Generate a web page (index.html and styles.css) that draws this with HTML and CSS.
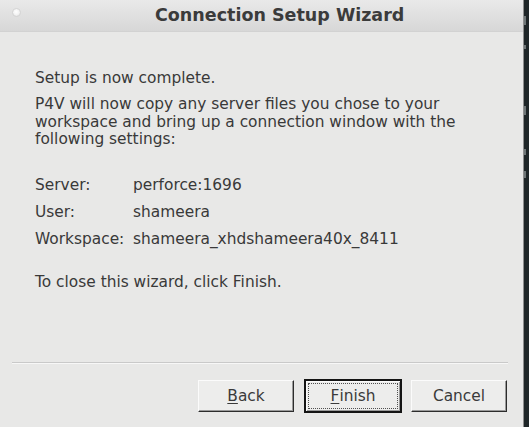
FILE: index.html
```html
<!DOCTYPE html>
<html>
<head>
<meta charset="utf-8">
<link rel="stylesheet" href="styles.css">
</head>
<body>
<div class="screen">
  <div class="window">
    <div class="titlebar">
      <span class="close-dot"></span>
      <span class="title">Connection Setup Wizard</span>
    </div>
    <div class="content">
      <p class="p1">Setup is now complete.</p>
      <p class="p2">P4V will now copy any server files you chose to your<br>workspace and bring up a connection window with the<br>following settings:</p>
      <div class="settings">
        <div class="row"><span class="key">Server:</span><span class="val">perforce:1696</span></div>
        <div class="row"><span class="key">User:</span><span class="val">shameera</span></div>
        <div class="row"><span class="key">Workspace:</span><span class="val">shameera_xhdshameera40x_8411</span></div>
      </div>
      <p class="p3">To close this wizard, click Finish.</p>
    </div>
    <div class="sep"></div>
    <div class="buttons">
      <button class="btn btn-back"><u>B</u>ack</button>
      <button class="btn btn-finish"><span class="focus"><u>F</u>inish</span></button>
      <button class="btn btn-cancel">Cancel</button>
    </div>
  </div>
  <div class="strip">
    <span class="mark m1"></span>
    <span class="mark m2"></span>
    <span class="mark m3"></span>
    <span class="mark m4"></span>
    <span class="mark m5"></span>
  </div>
</div>
</body>
</html>
```
FILE: styles.css
```css
html, body {
  margin: 0;
  padding: 0;
}
body {
  width: 529px;
  height: 427px;
  overflow: hidden;
  background: #1f2628;
  font-family: "DejaVu Sans", sans-serif;
}
.screen {
  display: flex;
  width: 529px;
  height: 427px;
}
.window {
  width: 523px;
  height: 427px;
  background: #e8e8e7;
  display: flex;
  flex-direction: column;
  flex: none;
}
.titlebar {
  height: 32px;
  box-sizing: border-box;
  padding-top: 5px;
  display: flex;
  align-items: flex-start;
  background: linear-gradient(#e9e9e9, #d7d7d7);
  border-bottom: 1px solid #d2d2d2;
}
.close-dot {
  width: 9px;
  height: 9px;
  box-sizing: border-box;
  margin-left: 12px;
  margin-top: 3px;
  border-radius: 50%;
  background: radial-gradient(circle at 45% 40%, #ffffff 0%, #f3f3f3 50%, #dcdcdc 100%);
  border: 1px solid #d4d4d4;
  flex: none;
}
.title {
  margin-left: 134px;
  font-weight: bold;
  font-size: 17.5px;
  line-height: 20px;
  color: #3b3b3b;
  white-space: nowrap;
}
.content {
  padding: 38px 0 0 35px;
  color: #393939;
  font-size: 15.4px;
  flex: 1;
}
.content p {
  margin: 0;
  white-space: nowrap;
}
.p1 {
  line-height: 17px;
}
.p2 {
  margin-top: 9px !important;
  line-height: 17.5px;
}
.settings {
  margin-top: 23px;
  display: flex;
  flex-direction: column;
}
.row {
  display: flex;
  height: 27px;
  line-height: 27px;
}
.key {
  width: 98px;
  flex: none;
}
.p3 {
  margin-top: 21px !important;
  line-height: 17px;
}
.sep {
  margin: 0 15px 0 12px;
  border-top: 1px solid #c9c9c9;
  border-bottom: 1px solid #f7f7f7;
}
.buttons {
  display: flex;
  justify-content: flex-end;
  align-items: center;
  padding: 15px 16px 14px 0;
  height: 34px;
}
.btn {
  font-family: "DejaVu Sans", sans-serif;
  font-size: 15.4px;
  color: #3a3a3a;
  background: #ededec;
  box-sizing: border-box;
  padding: 0;
  margin: 0;
  line-height: 17px;
  display: flex;
  align-items: center;
  justify-content: center;
}
.btn u {
  text-underline-offset: 2px;
}
.btn-back, .btn-cancel {
  width: 96px;
  height: 32px;
  border-top: 1px solid #fbfbfb;
  border-left: 1px solid #fbfbfb;
  border-right: 1px solid #2c2c2c;
  border-bottom: 1px solid #2c2c2c;
  box-shadow: inset -1px -1px 0 #9a9a9a;
}
.btn-back {
  margin-right: 10px;
}
.btn-finish {
  width: 98px;
  height: 34px;
  border: 2px solid #141414;
  margin-right: 9px;
  padding: 2px;
  box-shadow: inset 1px 1px 0 #fbfbfb, inset -1px -1px 0 #9a9a9a;
}
.focus {
  flex: 1;
  align-self: stretch;
  border: 1px dotted #505050;
  display: flex;
  align-items: center;
  justify-content: center;
}
.strip {
  flex: 1;
  border-left: 1px solid #8e8e8e;
  background: #1f2628;
  display: flex;
  flex-direction: column;
  overflow: hidden;
}
.mark {
  display: block;
  width: 2px;
  background: #6f7677;
}
.m1 { margin-top: 16px; height: 9px; }
.m2 { margin-top: 20px; height: 4px; }
.m3 { margin-top: 57px; height: 9px; }
.m4 { margin-top: 34px; height: 6px; }
.m5 { margin-top: 16px; height: 7px; }
```
